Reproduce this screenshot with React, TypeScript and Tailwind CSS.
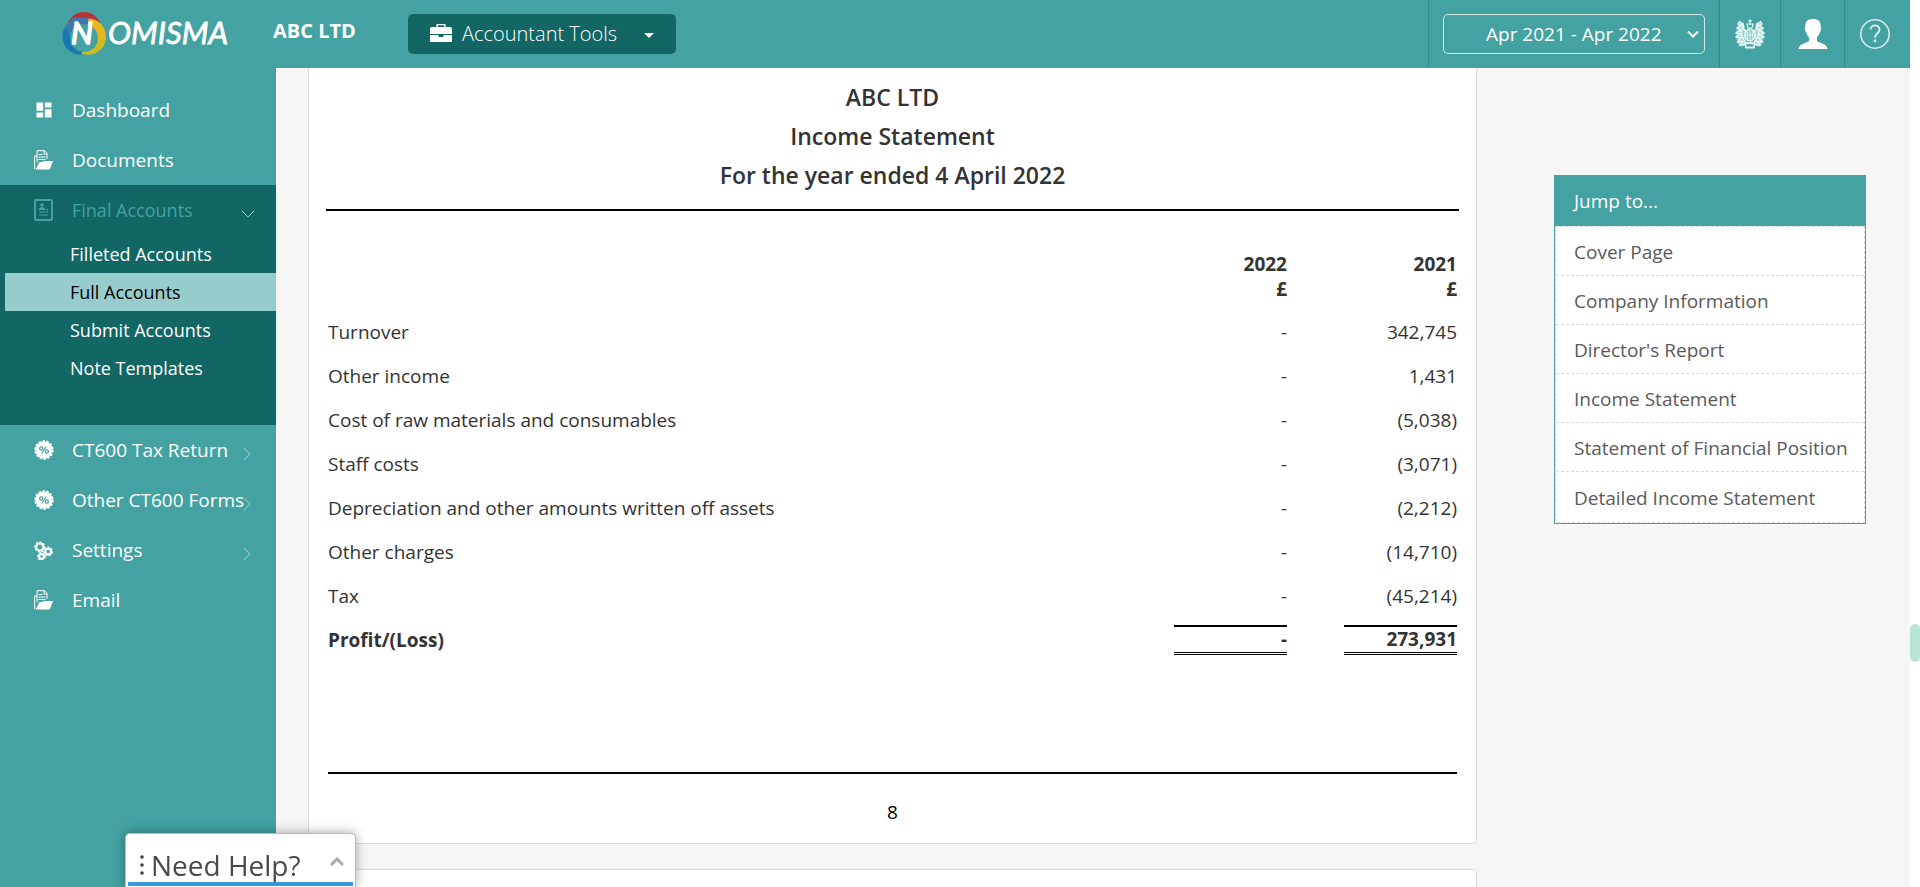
import type { ReactNode } from "react";
import { MdDashboard } from "react-icons/md";

function FolderIcon() {
  return (
    <svg viewBox="0 0 19 20" className="h-5 w-[19px]" fill="none" stroke="currentColor" aria-hidden="true">
      <path d="M3 12V.7h7.500L13 3.400V9M3 6H.6v13" strokeWidth="1" />
      <path d="M10 1v3h3M4.500 4.500h4M4.500 7h7M4.500 9.500h7" strokeWidth="1" />
      <path d="M5.500 12h3l1-1H19l-3.200 8.500H1.500z" fill="currentColor" stroke="none" />
    </svg>
  );
}

function ReportIcon() {
  return (
    <svg viewBox="0 0 19 22" className="h-[22px] w-[19px]" fill="none" stroke="currentColor" aria-hidden="true">
      <rect x="1" y="1" width="17" height="20" rx="1" strokeWidth="2" />
      <circle cx="8" cy="6" r="1.800" fill="currentColor" stroke="none" />
      <path d="M5 11V9.500c1-1 1.800-1 3-1.500 1.200.5 2 .5 3 1.500V11z" fill="currentColor" stroke="none" />
      <path d="M5 13h9M5 16h9M12 10.500h2" strokeWidth="1.200" />
    </svg>
  );
}

function PercentIcon() {
  return (
    <svg viewBox="0 0 20 20" className="h-5 w-5" aria-hidden="true">
      <circle cx="10" cy="10" r="8.600" fill="currentColor" />
      <circle cx="10" cy="10" r="8.800" fill="none" stroke="currentColor" strokeWidth="1.800" strokeDasharray="2.600 1.350" />
      <g fill="none" stroke="#44a2a2" strokeWidth="1.200">
        <circle cx="7.200" cy="8.500" r="1.600" />
        <circle cx="12.800" cy="11.500" r="1.600" />
        <path d="M12.300 6.500 7.700 13.500" />
      </g>
    </svg>
  );
}

function GearsIcon() {
  const gears = [
    { x: 5.8, y: 6, r: 3.6 },
    { x: 14.2, y: 10.5, r: 2.9 },
    { x: 7.5, y: 15.5, r: 2.4 },
  ];
  return (
    <svg viewBox="0 0 19 19" className="h-[19px] w-[19px]" fill="none" stroke="currentColor" aria-hidden="true">
      {gears.map((g) => (
        <g key={g.x}>
          <circle cx={g.x} cy={g.y} r={g.r} strokeWidth="2.200" />
          <circle cx={g.x} cy={g.y} r={g.r + 1.3} strokeWidth="1.400" strokeDasharray="2 1.700" />
        </g>
      ))}
    </svg>
  );
}

function Logo() {
  return (
    <svg viewBox="0 0 176 46" className="h-[46px] w-[176px]" role="img" aria-label="Nomisma">
      <defs>
        <mask id="ring">
          <rect width="176" height="46" fill="#fff" />
          <circle cx="23" cy="27" r="14" fill="#000" />
        </mask>
        <clipPath id="left-half">
          <path d="M0 0h29L20 46H0z" />
        </clipPath>
      </defs>
      <g mask="url(#ring)">
        <circle cx="23" cy="18" r="17" fill="#b93338" />
        <circle cx="27" cy="25.500" r="18" fill="#e9b51f" />
        <path d="M45 27a18 18 0 0 1-28 13.500l10-1 9-9z" fill="#c9bd22" />
        <g clipPath="url(#left-half)">
          <circle cx="19.500" cy="25.500" r="18" fill="#1778b0" />
          <path d="M4 16 12 7h18v8L10 27z" fill="#3d79ae" />
        </g>
      </g>
      <text x="10" y="33" fill="#fff" stroke="#fff" strokeWidth="1.600" className="font-['Lato'] text-[31px] italic">N</text>
      <text x="47" y="33" fill="#fff" stroke="#fff" strokeWidth=".8" className="font-['Lato'] text-[31px] italic">OMISMA</text>
    </svg>
  );
}

function CrestIcon() {
  return (
    <svg viewBox="0 0 30 30" className="h-[30px] w-[30px]" fill="none" stroke="#e4f5f4" aria-hidden="true">
      <path d="M5 2l4 7 3 3-2 8 3 5-7 3-4-5-1-9 2-7zM25 2l-4 7-3 3 2 8-3 5 7 3 4-5 1-9-2-7z" fill="#e4f5f4" fillOpacity=".6" stroke="none" />
      <path d="M15 0v6M13 2h4M12 5h6l-1 4h-4z" strokeWidth="1.200" />
      <ellipse cx="15" cy="16" rx="5" ry="6" fill="#e4f5f4" fillOpacity=".5" strokeWidth="1.600" />
      <path d="M15 11v10M11 16h8M12.500 12.500v7M17.500 12.500v7" strokeWidth=".8" />
      <path d="M5 2 3 5l3 2-4 2 4 2-5 3 5 1-5 3 5 1-3 4 5-1-3 4 5-1 1 3M6 3l2 6 3 4M7 9l-1 6 3 6 2 3M8 4l1 5" strokeWidth="1.500" />
      <path d="m25 2 2 3-3 2 4 2-4 2 5 3-5 1 5 3-5 1 3 4-5-1 3 4-5-1-1 3M24 3l-2 6-3 4M23 9l1 6-3 6-2 3M22 4l-1 5" strokeWidth="1.500" />
      <path d="M8 26q7-4 14 0M10 28.500h10M12 24h6" strokeWidth="1.900" />
    </svg>
  );
}

function PersonIcon() {
  return (
    <svg viewBox="0 0 30 30" className="h-[30px] w-[30px]" fill="#fff" aria-hidden="true">
      <path d="M15 0c5.500 0 8 2.500 7.600 8l.6 1c0 3-.8 3.500-1.500 4.500-.5 2.500-1.400 3.500-2.700 4.800V22c2 2 10 2.500 10.500 8H.5C1 24.500 9 24 11 22v-3.700c-1.300-1.300-2.200-2.300-2.700-4.800-.7-1-1.500-1.500-1.500-4.500l.6-1C7 2.500 9.500 0 15 0z" />
    </svg>
  );
}

function HelpIcon() {
  return (
    <svg viewBox="0 0 30 30" className="h-[30px] w-[30px]" fill="none" stroke="#d3ecea" aria-hidden="true">
      <circle cx="15" cy="15" r="14.200" strokeWidth="1.600" />
      <path d="M10.500 10.500c.2-5.500 9-5.300 9 .2 0 3.500-4.500 3.600-4.500 8" strokeWidth="2" />
      <circle cx="15" cy="22" r="1.400" fill="#d3ecea" stroke="none" />
    </svg>
  );
}

function NavChevron({ down = false }: { down?: boolean }) {
  return (
    <svg viewBox="0 0 14 14" className={down ? "mt-2 mr-[21px] ml-auto h-[14px] w-[14px] shrink-0 rotate-90" : "mt-2 mr-[22px] ml-auto h-[14px] w-[14px] shrink-0"} fill="none" stroke="#9fd0cf" aria-hidden="true">
      <path d="M4 1l6 6-6 6" />
    </svg>
  );
}

function NavItem({ icon, label, chevron, active }: { icon: ReactNode; label: string; chevron?: "right" | "down"; active?: boolean }) {
  return (
    <a href="#" className={active ? "flex h-[50px] items-center text-[18px] text-[#44a2a2]" : "flex h-[50px] items-center text-[19px] text-white"}>
      <span className="flex w-[72px] shrink-0 items-center pl-[34px]">{icon}</span>
      <span className="min-w-0 whitespace-nowrap">{label}</span>
      {chevron && <NavChevron down={chevron === "down"} />}
    </a>
  );
}

const subItems = ["Filleted Accounts", "Full Accounts", "Submit Accounts", "Note Templates"];

const rows: [string, string, string][] = [
  ["Turnover", "-", "342,745"],
  ["Other income", "-", "1,431"],
  ["Cost of raw materials and consumables", "-", "(5,038)"],
  ["Staff costs", "-", "(3,071)"],
  ["Depreciation and other amounts written off assets", "-", "(2,212)"],
  ["Other charges", "-", "(14,710)"],
  ["Tax", "-", "(45,214)"],
];

const jumpLinks = [
  "Cover Page",
  "Company Information",
  "Director's Report",
  "Income Statement",
  "Statement of Financial Position",
  "Detailed Income Statement",
];

function Header() {
  return (
    <header className="flex h-[68px] shrink-0 items-stretch bg-[#44a2a2] text-white">
      <div className="flex w-[273px] shrink-0 items-center pl-[61px]">
        <Logo />
      </div>
      <div className="w-[135px] shrink-0 pt-[18px] text-[20px] leading-[26px] font-bold">ABC LTD</div>
      <button type="button" className="mb-px flex h-10 w-[268px] shrink-0 items-center self-center rounded-[5px] bg-[#126664] pl-[22px] text-left text-[20px] font-light">
        <svg viewBox="0 0 22 19" className="mr-[10px] h-[19px] w-[22px]" fill="currentColor" aria-hidden="true">
          <path d="M7 3V1.500Q7 .5 8 .5h6q1 0 1 1V3" fill="none" stroke="currentColor" strokeWidth="1.400" />
          <path d="M2 3h18q2 0 2 2v5H0V5q0-2 2-2zM0 11h8.500v2h5v-2H22v6q0 1-1 1H1q-1 0-1-1z" />
        </svg>
        Accountant Tools
        <svg viewBox="0 0 10 5" className="mt-1 mr-[22px] ml-auto h-[5px] w-[10px]" fill="currentColor" aria-hidden="true">
          <path d="M0 0h10L5 5z" />
        </svg>
      </button>
      <div className="ml-auto flex items-stretch">
        <div className="flex w-[291px] items-center border-l border-[#2f8c8c] px-[14px]">
          <div className="relative w-full">
            <select aria-label="Accounting period" className="h-10 w-full appearance-none rounded-[5px] border border-[#d3e9e8] bg-transparent pl-[42px] text-[19px] text-white">
              <option>Apr 2021 - Apr 2022</option>
            </select>
            <svg viewBox="0 0 12 8" className="pointer-events-none absolute top-4 right-[6px] h-2 w-3" fill="none" stroke="#fff" strokeWidth="2" aria-hidden="true">
              <path d="M1 1.500l5 5 5-5" />
            </svg>
          </div>
        </div>
        <button type="button" aria-label="Companies House" className="flex w-[61px] items-center justify-center border-l border-[#2f8c8c]"><CrestIcon /></button>
        <button type="button" aria-label="Profile" className="flex w-16 items-center justify-center border-l border-[#2f8c8c]"><PersonIcon /></button>
        <button type="button" aria-label="Help" className="flex w-[66px] items-center border-l border-[#2f8c8c] pl-[15px]"><HelpIcon /></button>
      </div>
    </header>
  );
}

function Sidebar() {
  return (
    <nav className="w-[276px] shrink-0 bg-[#44a2a2] pt-[17px]">
      <NavItem icon={<MdDashboard className="h-5 w-5" />} label="Dashboard" />
      <NavItem icon={<FolderIcon />} label="Documents" />
      <div className="bg-[#126664] pb-[38px]">
        <NavItem icon={<ReportIcon />} label="Final Accounts" chevron="down" active />
        {subItems.map((label) => (
          <a
            key={label}
            href="#"
            className={
              label === "Full Accounts"
                ? "ml-[5px] flex h-[38px] items-center bg-[#97cccc] pl-[65px] text-[18px] text-black"
                : "ml-[5px] flex h-[38px] items-center pl-[65px] text-[18px] text-white"
            }
          >
            {label}
          </a>
        ))}
      </div>
      <NavItem icon={<PercentIcon />} label="CT600 Tax Return" chevron="right" />
      <NavItem icon={<PercentIcon />} label="Other CT600 Forms" chevron="right" />
      <NavItem icon={<GearsIcon />} label="Settings" chevron="right" />
      <NavItem icon={<FolderIcon />} label="Email" />
    </nav>
  );
}

function Statement() {
  return (
    <section className="shrink-0 rounded-b-[5px] border border-t-0 border-[#dcdcdc] bg-white px-[17px] pt-[10px] pb-[18px]">
      <div className="border-b-2 border-black pb-[14px] text-center text-[23px] leading-[39px] font-semibold">
        <h1>ABC LTD</h1>
        <h2>Income Statement</h2>
        <h2>For the year ended 4 April 2022</h2>
      </div>
      <div className="px-[2px]">
        <table className="mt-[41px] w-full border-collapse text-[19px] leading-[25px]">
          <thead>
            <tr className="align-top text-right">
              <td />
              <th className="h-[58px] w-[113px] font-bold">2022<br />£</th>
              <td className="w-[57px]" />
              <th className="w-[113px] font-bold">2021<br />£</th>
            </tr>
          </thead>
          <tbody>
            {rows.map(([label, current, previous]) => (
              <tr key={label} className="h-11">
                <td>{label}</td>
                <td className="text-right">{current}</td>
                <td />
                <td className="text-right">{previous}</td>
              </tr>
            ))}
            <tr className="h-11 font-bold">
              <td>Profit/(Loss)</td>
              <td className="text-right">
                <div className="border-t-2 border-b-3 border-t-black border-b-black [border-bottom-style:double]">-</div>
              </td>
              <td />
              <td className="text-right">
                <div className="border-t-2 border-b-3 border-t-black border-b-black [border-bottom-style:double]">273,931</div>
              </td>
            </tr>
          </tbody>
        </table>
        <div className="mt-[110px] border-t-2 border-black pt-[25px] text-center text-[19px] leading-[26px] text-black">8</div>
      </div>
    </section>
  );
}

function JumpTo() {
  return (
    <aside className="mt-[107px] w-[312px] shrink-0 self-start border border-[#44a2a2] bg-white text-[19px]">
      <h2 className="flex h-[50px] items-center bg-[#44a2a2] pt-px pl-[19px] font-medium text-white">Jump to...</h2>
      <ul className="rounded-b-[4px] border border-dashed border-[#d9d9d9] pb-px text-[#5a5a5a]">
        {jumpLinks.map((label) => (
          <li key={label} className="border-b border-dashed border-[#d9d9d9] last:border-b-0 last:pt-px">
            <a href="#" className="flex h-12 items-center pt-[2px] pl-[18px] whitespace-nowrap">{label}</a>
          </li>
        ))}
      </ul>
    </aside>
  );
}

export default function App() {
  return (
    <div className="flex h-screen overflow-hidden bg-white font-['Open_Sans',sans-serif] text-[#333]">
      <div className="flex min-w-0 flex-1 flex-col">
        <Header />
        <div className="flex min-h-0 flex-1">
          <Sidebar />
          <main className="flex min-w-0 flex-1 gap-[77px] overflow-hidden bg-[#f6f6f6] pr-11 pl-8">
            <div className="flex min-w-0 flex-1 flex-col gap-[25px]">
              <Statement />
              <section className="h-40 shrink-0 rounded-[5px] border border-[#dcdcdc] bg-white" />
            </div>
            <JumpTo />
          </main>
        </div>
      </div>
      <div className="w-[10px] shrink-0 bg-white pt-[624px]">
        <div className="h-[38px] rounded-[5px] bg-[#b9e4d8]" />
      </div>
      <button type="button" className="fixed bottom-0 left-[125px] flex h-[54px] w-[231px] flex-col rounded-t-[5px] border border-b-0 border-[#bcbcbc] bg-white px-[2px] text-left shadow-[0_0_12px_rgba(0,0,0,0.35)]">
        <span className="flex h-12 w-full items-center pt-[14px] pl-3 text-[28px] leading-8 font-medium text-[#4a4a4a]">
          <svg viewBox="0 0 4 20" className="mr-[7px] h-5 w-1" fill="#444" aria-hidden="true">
            <circle cx="2" cy="2" r="1.800" />
            <circle cx="2" cy="10" r="1.800" />
            <circle cx="2" cy="18" r="1.800" />
          </svg>
          Need Help?
          <svg viewBox="0 0 14 9" className="mr-[9px] mb-2 ml-auto h-[9px] w-[14px]" fill="none" stroke="#aaa" strokeWidth="3" aria-hidden="true">
            <path d="M1 8l6-6 6 6" />
          </svg>
        </span>
        <span className="h-1 w-full bg-[#3498db]" />
      </button>
    </div>
  );
}
